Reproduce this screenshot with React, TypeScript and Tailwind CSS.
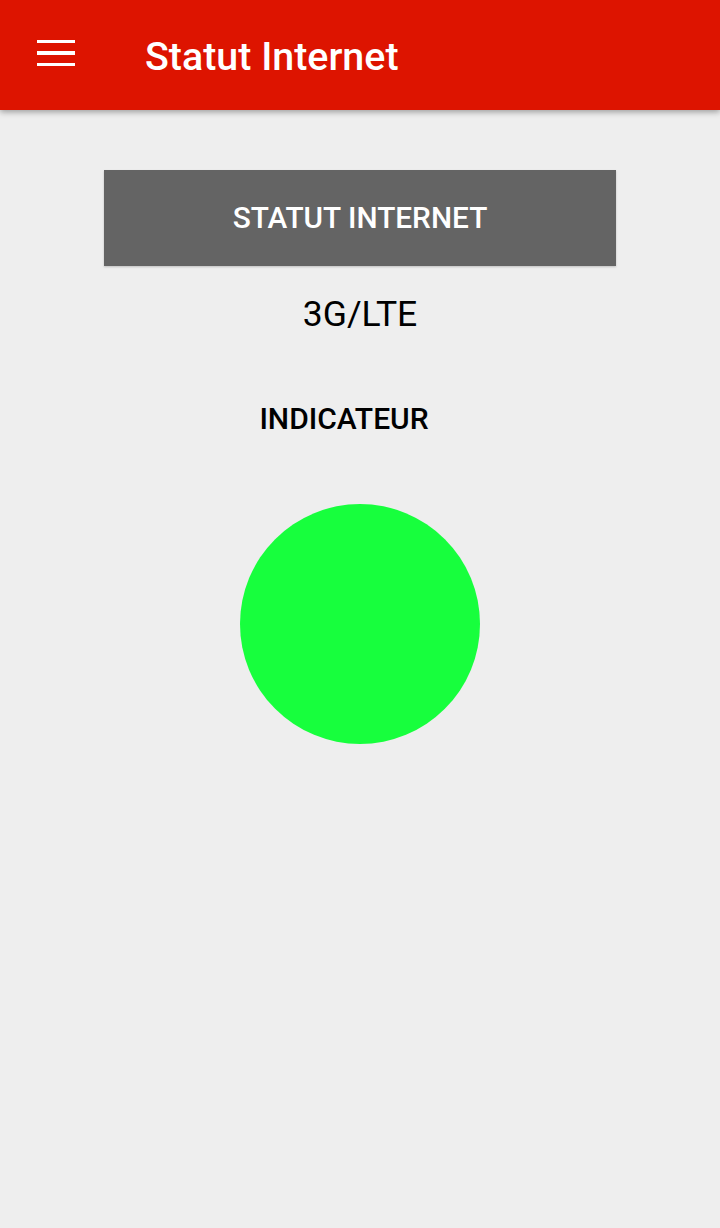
export default function App() {
  return (
    <div className="min-h-[1228px] bg-[#eeeeee] font-['Roboto','Liberation_Sans',sans-serif]">
      <header className="h-[110px] bg-[#dd1400] flex items-center shadow-[0_2px_6px_rgba(0,0,0,0.35)] relative z-10">
        <button className="w-[38px] ml-[37px] mb-[4px] flex flex-col gap-[8px]">
          <span className="block h-[3.4px] bg-white" />
          <span className="block h-[3.4px] bg-white" />
          <span className="block h-[3.4px] bg-white" />
        </button>
        <h1 className="ml-[70px] text-white text-[39.4px] font-medium leading-none pt-[4px]">
          Statut Internet
        </h1>
      </header>

      <main className="flex flex-col items-center pt-[60px]">
        <button className="w-[512px] h-[96px] bg-[#646464] text-white text-[29.8px] font-medium pt-[1px] shadow-[0_1px_2px_rgba(0,0,0,0.2)]">
          STATUT INTERNET
        </button>
        <p className="mt-[26px] text-[35.5px] leading-[44px] text-black">3G/LTE</p>
        <p className="mt-[66px] text-[30px] leading-[34px] font-medium text-black mr-[32px]">
          INDICATEUR
        </p>
        <div className="mt-[68px] w-[240px] h-[240px] rounded-full bg-[#17ff3d]" />
      </main>
    </div>
  );
}
